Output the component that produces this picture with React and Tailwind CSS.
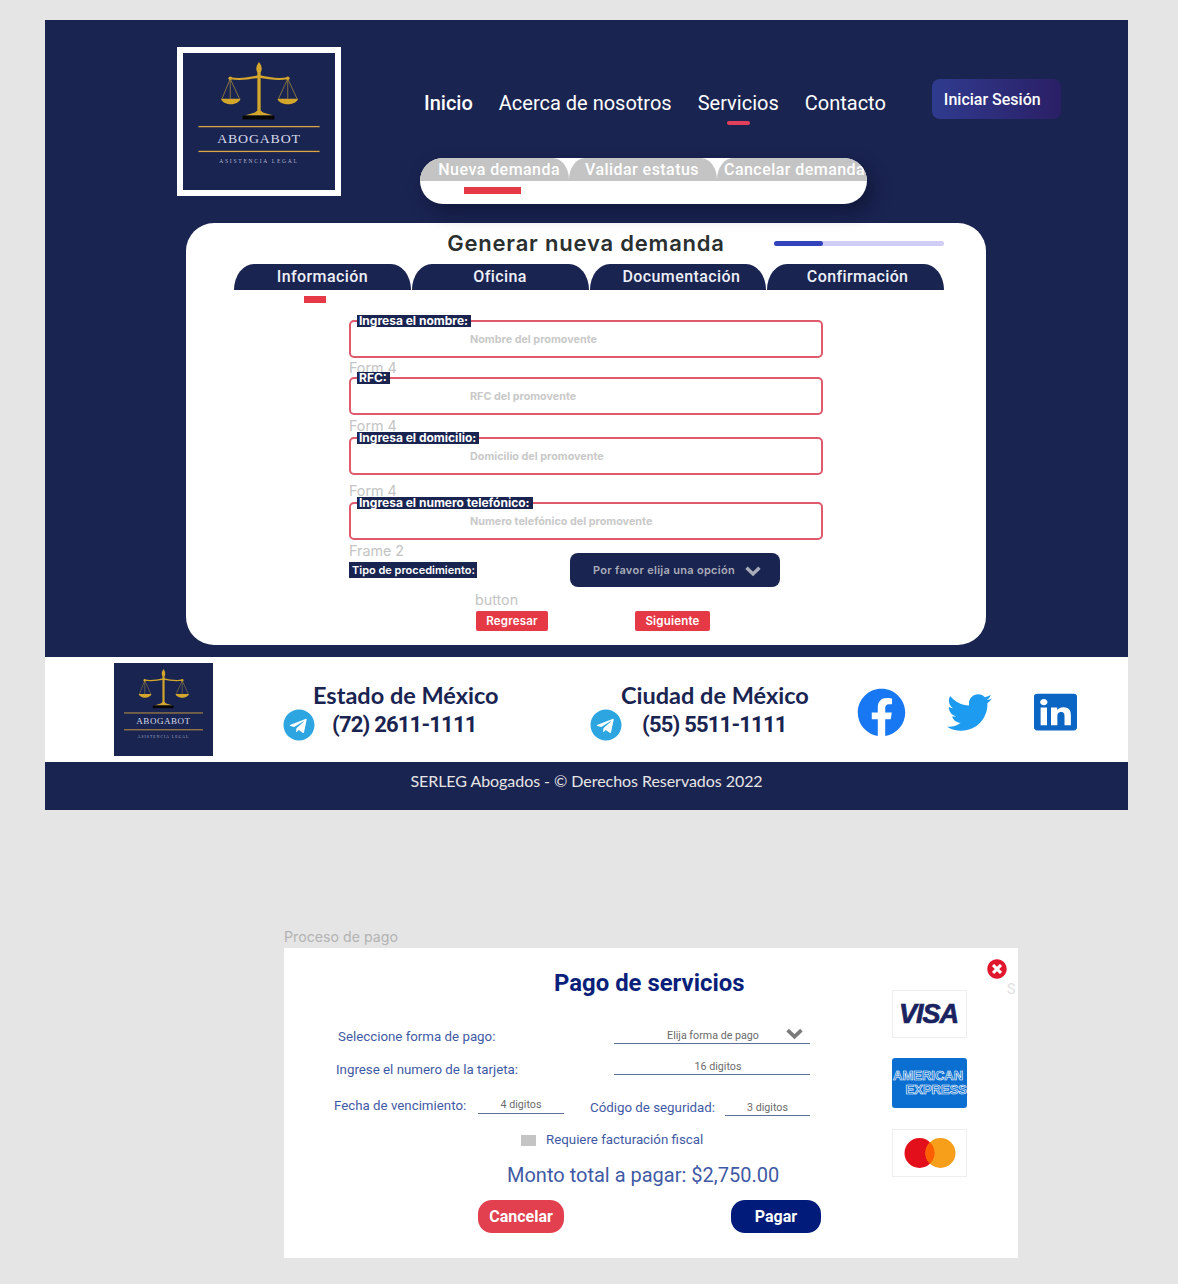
import React from "react";
import { FaFacebook, FaTwitter, FaTelegram, FaLinkedin, FaTimesCircle } from "react-icons/fa";

function Chevron({ className }) {
  return (
    <svg viewBox="0 0 16 11" className={className} fill="none" stroke="currentColor" strokeWidth="3.4">
      <path d="M1.5 1.8 L8 8 L14.5 1.8" />
    </svg>
  );
}

function Logo() {
  return (
    <svg viewBox="0 0 148 138" className="block w-full h-full" preserveAspectRatio="none">
      <rect width="148" height="138" fill="#1a2451" />
      <g fill="#d4a72c" stroke="none">
        <path d="M74 9 C76 12 77 14 76.5 17 L75.6 20 L75.6 58 L78 60 L88 63 L60 63 L70 60 L72.4 58 L72.4 20 L71.5 17 C71 14 72 12 74 9 Z" />
        <path d="M46 24.5 C56 26 64 24.5 73 22.5 L75 22.5 C84 24.5 92 26 102 24.5 L102 26.5 C92 28 83 26.5 74 25 C65 26.5 56 28 46 26.5 Z" />
        <circle cx="46" cy="25.5" r="1.8" />
        <circle cx="102" cy="25.5" r="1.8" />
        <path d="M37 46 L56 46 C55 50 50 51.5 46.5 51.5 C43 51.5 38 50 37 46 Z" />
        <path d="M92 46 L112 46 C111 50 106 51.5 102 51.5 C98 51.5 93 50 92 46 Z" />
      </g>
      <g stroke="#c9a436" strokeWidth="0.6" fill="none">
        <path d="M46 26 L38 46 M46 26 L55 46 M46 26 L46 46" />
        <path d="M102 26 L93 46 M102 26 L111 46 M102 26 L102 46" />
      </g>
      <rect x="58" y="63" width="31" height="4" fill="#050505" />
      <rect x="15" y="73.5" width="118" height="1.3" fill="#d9a441" />
      <rect x="15" y="98.5" width="118" height="1.3" fill="#d9a441" />
      <text x="74" y="90.5" textAnchor="middle" fill="#d6dbea" fontFamily="Liberation Serif, serif" fontSize="13.5" letterSpacing="0.8">ABOGABOT</text>
      <text x="74" y="111" textAnchor="middle" fill="#aeb5d0" fontFamily="Liberation Serif, serif" fontSize="5.4" letterSpacing="1.7">ASISTENCIA LEGAL</text>
    </svg>
  );
}

function Field({ label, placeholder }) {
  return (
    <div className="relative h-[38px] w-[474px] rounded-[5px] border-2 border-[#de5a6c] bg-white">
      <span className="absolute left-[6px] -top-[7px] bg-[#1a2451] pl-[2px] pr-[3px] text-[12px] leading-[12px] font-bold text-white whitespace-nowrap">{label}</span>
      <span className="absolute left-[119px] top-[11px] text-[10.8px] leading-[14px] font-bold text-[#c9c9c9] whitespace-nowrap">{placeholder}</span>
    </div>
  );
}

function Ghost({ children, h, pt = "" }) {
  return <div className={`text-[14.3px] leading-[20px] text-[#c4c4c4] ${h} ${pt}`}>{children}</div>;
}

function UnderField({ w, h, children, extra }) {
  return (
    <div className={`relative flex justify-center border-b border-[#5f6f9c] ${w} ${h}`}>
      <span className="text-[10.7px] leading-[14px] text-[#6b6b6b] whitespace-nowrap">{children}</span>
      {extra}
    </div>
  );
}

const Contact = ({ w, title, titleMl, phone, gap }) => (
  <div className={`flex flex-col text-[#1a2451] ${w}`}>
    <div className={`${titleMl} h-[28px] text-[23.5px] leading-[28px] font-bold whitespace-nowrap`} style={{ fontFamily: "Lato, sans-serif" }}>{title}</div>
    <div className="flex items-center">
      <FaTelegram className="text-[32px] text-[#2ca5e0] shrink-0" />
      <div className={`${gap} text-[22px] leading-[32px] font-bold tracking-[-0.8px] whitespace-nowrap`} style={{ fontFamily: "Roboto, sans-serif" }}>{phone}</div>
    </div>
  </div>
);

export default function App() {
  const navItems = ["Inicio", "Acerca de nosotros", "Servicios", "Contacto"];
  const tabs = [
    { t: "Información", c: "" },
    { t: "Oficina", c: "" },
    { t: "Documentación", c: "pl-[7px]" },
    { t: "Confirmación", c: "pl-[4px]" },
  ];
  return (
    <div className="h-[1284px] overflow-hidden bg-[#e5e5e5] pt-[20px]" style={{ fontFamily: "Inter, sans-serif" }}>
      <div className="ml-[45px] w-[1083px]">
        <div className="h-[637px] bg-[#1a2451] pt-[27px]">
          <div className="flex h-[176px]">
            <div className="ml-[132px] h-[149px] w-[164px] border-[6px] border-white bg-[#1a2451]">
              <Logo />
            </div>
            <div className="ml-[79px]" style={{ fontFamily: "Roboto, sans-serif" }}>
              <div className="flex items-start">
                <div className="ml-[4px] flex gap-[26px] pt-[44px]">
                  {navItems.map((n) => (
                    <div key={n} className="flex flex-col items-center">
                      <span className={`text-[20px] leading-[24px] text-white whitespace-nowrap ${n === "Inicio" ? "font-medium" : ""}`}>{n}</span>
                      {n === "Servicios" && <span className="mt-[6px] h-[4px] w-[23px] rounded-sm bg-[#e2405a]" />}
                    </div>
                  ))}
                </div>
                <div className="ml-[46px] mt-[32px] flex h-[40px] w-[129px] items-center rounded-[8px] bg-gradient-to-r from-[#2f3b8f] to-[#2a1f66] pl-[12px] pt-[2px] text-[16px] font-medium text-white whitespace-nowrap">
                  Iniciar Sesión
                </div>
              </div>
              <div className="mt-[33px] h-[46px] w-[447px] overflow-hidden rounded-[23px] bg-white shadow-[6px_8px_18px_rgba(5,8,30,0.45)]">
                <div className="flex h-[23px]">
                  <div className="flex w-[149px] justify-end rounded-tr-[16px_22px] bg-[#c4c4c4] pr-[9px] text-[16px] leading-[23px] font-medium tracking-[0.45px] text-white whitespace-nowrap">Nueva demanda</div>
                  <div className="flex w-[148px] justify-center rounded-t-[16px_22px] bg-[#c4c4c4] pr-[2px] text-[16px] leading-[23px] font-medium tracking-[0.45px] text-white whitespace-nowrap">Validar estatus</div>
                  <div className="w-[150px] rounded-tl-[16px_22px] bg-[#c4c4c4] pl-[7px] text-[16px] leading-[23px] font-medium tracking-[0.45px] text-white whitespace-nowrap">Cancelar demanda</div>
                </div>
                <div className="ml-[44px] mt-[6px] h-[7px] w-[57px] bg-[#e63946]" />
              </div>
            </div>
          </div>

          <div className="ml-[141px] h-[422px] w-[800px] rounded-[28px] bg-white">
            <div className="grid h-[41px] grid-cols-[1fr_auto_1fr] items-center pl-[42px] pr-[42px]">
              <div />
              <div className="-mt-[2px] text-[22px] leading-[28px] font-semibold tracking-[0.8px] text-[#2a2f30] whitespace-nowrap">Generar nueva demanda</div>
              <div className="flex justify-end">
                <div className="h-[5px] w-[170px] rounded-full bg-[#cfcdf6]">
                  <div className="h-[5px] w-[49px] rounded-full bg-[#3344bb]" />
                </div>
              </div>
            </div>
            <div className="ml-[48px] grid w-[710px] grid-cols-4 gap-[1px]" style={{ fontFamily: "Roboto, sans-serif" }}>
              {tabs.map(({ t, c }) => (
                <div key={t} className={`h-[26px] rounded-t-[20px_26px] bg-[#1a2451] text-center text-[16px] leading-[25px] font-medium tracking-[0.4px] text-[#eef0f8] ${c}`}>{t}</div>
              ))}
            </div>
            <div className="ml-[118px] mt-[6px] h-[7px] w-[22px] bg-[#e63946]" />
            <div className="ml-[163px] mt-[17px]">
              <Field label="Ingresa el nombre:" placeholder="Nombre del promovente" />
              <Ghost h="h-[19px]">Form 4</Ghost>
              <Field label="RFC:" placeholder="RFC del promovente" />
              <Ghost h="h-[22px]" pt="pt-[1px]">Form 4</Ghost>
              <Field label="Ingresa el domicilio:" placeholder="Domicilio del promovente" />
              <Ghost h="h-[27px]" pt="pt-[6px]">Form 4</Ghost>
              <Field label="Ingresa el numero telefónico:" placeholder="Numero telefónico del promovente" />
              <Ghost h="h-[13px]" pt="pt-[1px]">Frame 2</Ghost>
              <div className="flex items-center">
                <div className="flex h-[16px] w-[128px] items-center bg-[#1a2451] pl-[3px] text-[11px] font-semibold text-white whitespace-nowrap">Tipo de procedimiento:</div>
                <div className="ml-[93px] flex h-[34px] w-[210px] items-center rounded-[8px] bg-[#1a2451] pl-[23px]">
                  <span className="text-[11px] font-semibold tracking-[0.3px] text-[#a9adb9] whitespace-nowrap">Por favor elija una opción</span>
                  <Chevron className="ml-[10px] mt-[2px] w-[16px] h-[11px] text-[#a9adb9]" />
                </div>
              </div>
              <div className="ml-[126px] h-[24px] text-[14.3px] leading-[26px] text-[#c4c4c4]">button</div>
              <div className="ml-[127px] flex gap-[87px]">
                <div className="flex h-[20px] w-[72px] items-center justify-center rounded-[2px] bg-[#e63946] pt-[2px] text-[11.5px] font-semibold tracking-[0.2px] text-white">Regresar</div>
                <div className="flex h-[20px] w-[75px] items-center justify-center rounded-[2px] bg-[#e63946] pt-[2px] text-[11.5px] font-semibold tracking-[0.2px] text-white">Siguiente</div>
              </div>
            </div>
          </div>
        </div>

        <div className="flex h-[105px] items-start bg-white">
          <div className="ml-[69px] mt-[6px] h-[93px] w-[99px] shrink-0"><Logo /></div>
          <div className="ml-[70px] mt-[24px] flex items-start">
            <Contact w="w-[307px]" title="Estado de México" titleMl="ml-[30px]" phone="(72) 2611-1111" gap="ml-[17px]" />
            <Contact w="w-[268px]" title="Ciudad de México" titleMl="ml-[31px]" phone="(55) 5511-1111" gap="ml-[20px]" />
          </div>
          <FaFacebook className="-ml-[1px] mt-[31px] shrink-0 text-[49px] text-[#1877f2]" />
          <FaTwitter className="ml-[41px] mt-[33px] shrink-0 text-[45px] text-[#1d9bf0]" />
          <FaLinkedin preserveAspectRatio="none" className="ml-[42px] mt-[34px] h-[42px] w-[43px] shrink-0 text-[#0a66c2]" />
        </div>

        <div className="h-[48px] bg-[#1a2451] pt-[7px] text-center text-[16px] leading-[24px] tracking-[-0.05px] text-[#e6e6e6]" style={{ fontFamily: "Lato, sans-serif" }}>
          SERLEG Abogados - © Derechos Reservados 2022
        </div>
      </div>

      <div className="ml-[284px] mt-[117px] h-[21px] text-[14.2px] leading-[20px] text-[#b3b3b3]">Proceso de pago</div>
      <div className="relative ml-[284px] flex h-[310px] w-[734px] bg-white" style={{ fontFamily: "Roboto, sans-serif" }}>
        <FaTimesCircle className="absolute left-[703px] top-[11px] text-[20px] text-[#e0182d]" />
        <span className="absolute left-[723px] top-[31px] w-[10px] overflow-hidden text-[14px] text-[#e2e2e2]">S</span>
        <div className="w-[608px] text-[#3f5aa5]">
          <div className="ml-[270px] mt-[19px] h-[32px] text-[23.9px] leading-[32px] font-bold text-[#0a1f7a] whitespace-nowrap">Pago de servicios</div>

          <div className="mt-[27px] flex">
            <div className="ml-[54px] mt-[1px] w-[276px] text-[13.3px] leading-[20px]">Seleccione forma de pago:</div>
            <UnderField w="w-[196px]" h="h-[18px]" extra={<Chevron className="absolute left-[172px] top-[2px] w-[17px] h-[12px] text-[#7b7b7b]" />}>
              <span className="relative left-[1px] top-[3px]">Elija forma de pago</span>
            </UnderField>
          </div>

          <div className="mt-[10px] flex">
            <div className="ml-[52px] mt-[3px] w-[278px] text-[13.3px] leading-[20px]">Ingrese el numero de la tarjeta:</div>
            <UnderField w="w-[196px]" h="h-[18px]"><span className="relative left-[6px] top-[3px]">16 digitos</span></UnderField>
          </div>

          <div className="mt-[15px] flex">
            <div className="ml-[50px] mt-[1px] w-[144px] text-[13.3px] leading-[20px] whitespace-nowrap">Fecha de vencimiento:</div>
            <UnderField w="w-[86px]" h="h-[19px]"><span className="relative top-[3px]">4 digitos</span></UnderField>
            <div className="ml-[26px] mt-[3px] w-[135px] text-[13.3px] leading-[20px] whitespace-nowrap">Código de seguridad:</div>
            <UnderField w="w-[85px]" h="h-[19px] mt-[2px]"><span className="relative top-[4px]">3 digitos</span></UnderField>
          </div>

          <div className="mt-[12px] flex h-[20px] items-center">
            <div className="ml-[237px] h-[11px] w-[15px] bg-[#c4c4c4]" />
            <div className="ml-[10px] text-[13.3px] leading-[20px] whitespace-nowrap">Requiere facturación fiscal</div>
          </div>

          <div className="ml-[223px] mt-[11px] h-[28px] text-[20px] leading-[28px] whitespace-nowrap">Monto total a pagar: $2,750.00</div>

          <div className="ml-[194px] mt-[11px] flex">
            <div className="flex h-[33px] w-[86px] items-center justify-center rounded-[14px] bg-[#e2404f] text-[16px] font-bold text-white">Cancelar</div>
            <div className="ml-[167px] flex h-[33px] w-[90px] items-center justify-center rounded-[14px] bg-[#001b7a] text-[16px] font-bold text-white">Pagar</div>
          </div>
        </div>

        <div className="mt-[42px] w-[75px]">
          <div className="flex h-[48px] items-center justify-center border border-[#eeeeee] pr-[2px] text-[27px] font-bold italic tracking-[-1px] text-[#1a2360] [-webkit-text-stroke:0.7px_#1a2360]" style={{ fontFamily: "Liberation Sans, sans-serif" }}>VISA</div>
          <div className="mt-[20px] flex h-[50px] flex-col justify-center overflow-hidden rounded-[3px] bg-[#0b6fd1] text-[13px] leading-[14px] font-bold text-[#0b6fd1] [-webkit-text-stroke:0.6px_white]" style={{ fontFamily: "Liberation Sans, sans-serif" }}>
            <div className="pl-[1px] whitespace-nowrap">AMERICAN</div>
            <div className="text-right whitespace-nowrap">EXPRESS</div>
          </div>
          <div className="mt-[21px] flex h-[48px] items-center justify-center border border-[#eeeeee]">
            <svg width="52" height="30" viewBox="0 0 52 30">
              <circle cx="15.5" cy="15" r="15" fill="#e3101c" />
              <circle cx="36.5" cy="15" r="15" fill="#f79e1b" />
              <path d="M26 4.2 A15 15 0 0 1 26 25.8 A15 15 0 0 1 26 4.2 Z" fill="#ff5f00" />
            </svg>
          </div>
        </div>
      </div>
    </div>
  );
}
